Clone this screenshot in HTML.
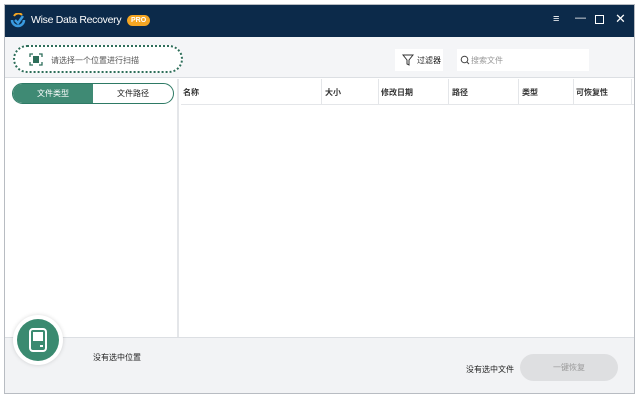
<!DOCTYPE html>
<html><head><meta charset="utf-8"><style>
*{margin:0;padding:0;box-sizing:border-box}
body{width:640px;height:400px;background:#fff;font-family:"Liberation Sans","Noto Sans CJK SC",sans-serif;font-size:8px;color:#222;position:relative;overflow:hidden}
.win{position:absolute;left:4px;top:4px;width:631px;height:390px;border:1px solid #b8bcc2;background:#fff}
.title{position:absolute;left:0;top:0;width:629px;height:32px;background:#0c2a4a;color:#fff}
.title .t{position:absolute;left:26px;top:9px;font-size:10.5px;letter-spacing:-0.3px}
.pro{position:absolute;left:122px;top:10px;background:#f5a623;color:#fff;font-size:7px;font-weight:bold;border-radius:6px;padding:1px 4px;line-height:9px}
.tb{position:absolute;left:0;top:32px;width:629px;height:41px;background:#f4f5f7;border-bottom:1px solid #dcdfe3}
.scan{position:absolute;left:8px;top:8px;width:170px;height:28px;border:2px dotted #2e6e5a;border-radius:14px;background:#fff}
.scan span{position:absolute;left:36px;top:8px;color:#555}
.filt{position:absolute;left:390px;top:12px;width:48px;height:22px;background:#fff;font-size:8px;padding:6px 0 0 22px}
.srch{position:absolute;left:452px;top:12px;width:132px;height:22px;background:#fff;color:#999;padding:6px 0 0 14px}
.left{position:absolute;left:0;top:74px;width:174px;height:258px;border-right:2px solid #e4e6e9}
.seg{position:absolute;left:7px;top:4px;width:162px;height:21px;border:1px solid #2e7a65;border-radius:11px;overflow:hidden;display:flex}
.seg div{flex:1;text-align:center;line-height:19px}
.seg .a{background:#3f8a74;color:#fff}
.hdr{position:absolute;left:176px;top:74px;width:453px;height:26px;border-bottom:1px solid #e4e6e9}
.hdr span{position:absolute;top:8px;font-weight:bold;color:#333}
.hdr i{position:absolute;top:0;height:26px;border-left:1px solid #e4e6e9}
.bot{position:absolute;left:0;top:332px;width:629px;height:56px;background:#f2f3f5;border-top:1px solid #dcdfe3}
.circ{position:absolute;left:13px;top:315px;width:50px;height:50px;border-radius:50%;background:#fff;box-shadow:0 0 4px rgba(0,0,0,.15)}
.circ div{position:absolute;left:4px;top:4px;width:42px;height:42px;border-radius:50%;background:#3a8a70}
.btn{position:absolute;left:520px;top:354px;width:98px;height:27px;border-radius:14px;background:#dedfe1;color:#9a9a9a;text-align:center;line-height:27px}
</style></head><body>
<div class="win">
 <div class="title">
  <svg style="position:absolute;left:5px;top:8px" width="16" height="16" viewBox="0 0 16 16"><path d="M2 7 A6 6 0 0 0 14 7" stroke="#3a9be0" stroke-width="2.5" fill="none"/><path d="M5 7 L8 10 L13 3" stroke="#3a9be0" stroke-width="2.5" fill="none"/><path d="M4 3 A5 5 0 0 1 12 2" stroke="#f5a623" stroke-width="2" fill="none"/></svg>
  <span class="t">Wise Data Recovery</span><span class="pro">PRO</span>
  <span style="position:absolute;left:548px;top:8px;font-size:11px">≡</span>
  <span style="position:absolute;left:570px;top:7px;font-size:11px">—</span>
  <span style="position:absolute;left:590px;top:10px;width:9px;height:9px;border:1.5px solid #fff"></span>
  <span style="position:absolute;left:610px;top:6px;font-size:13px">✕</span>
 </div>
 <div class="tb">
  <div class="scan"><svg style="position:absolute;left:14px;top:6px" width="14" height="13" viewBox="0 0 14 13"><path d="M1 4V1h3M10 1h3v3M13 9v3h-3M4 12H1V9" stroke="#2e6e5a" fill="none" stroke-width="1.3"/><rect x="4" y="3" width="6" height="7" fill="#2e6e5a"/></svg><span>请选择一个位置进行扫描</span></div>
  <div class="filt"><svg style="position:absolute;left:7px;top:5px" width="12" height="12" viewBox="0 0 12 12"><path d="M1 1h10L7 6v5L5 10V6z" stroke="#333" fill="none"/></svg>过滤器</div>
  <div class="srch"><svg style="position:absolute;left:3px;top:6px" width="10" height="10"><circle cx="4.5" cy="4.5" r="3.3" stroke="#444" fill="none"/><path d="M7 7l2 2" stroke="#444"/></svg>搜索文件</div>
 </div>
 <div class="left"><div class="seg"><div class="a">文件类型</div><div>文件路径</div></div></div>
 <div class="hdr">
  <span style="left:2px">名称</span><i style="left:140px"></i>
  <span style="left:144px">大小</span><i style="left:197px"></i>
  <span style="left:200px">修改日期</span><i style="left:267px"></i>
  <span style="left:271px">路径</span><i style="left:337px"></i>
  <span style="left:341px">类型</span><i style="left:392px"></i>
  <span style="left:395px">可恢复性</span><i style="left:450px"></i>
 </div>
 <div class="bot">
  <span style="position:absolute;left:88px;top:14px">没有选中位置</span>
  <span style="position:absolute;left:461px;top:26px">没有选中文件</span>
 </div>
</div>
<div class="circ"><div><svg style="position:absolute;left:12px;top:9px" width="18" height="24" viewBox="0 0 18 24"><rect x="1" y="1" width="16" height="22" rx="3" stroke="#fff" stroke-width="2" fill="none"/><rect x="4" y="4" width="10" height="9" fill="#fff"/><rect x="11" y="17" width="3" height="2" fill="#fff"/></svg></div></div>
<div class="btn">一键恢复</div>
</body></html>
